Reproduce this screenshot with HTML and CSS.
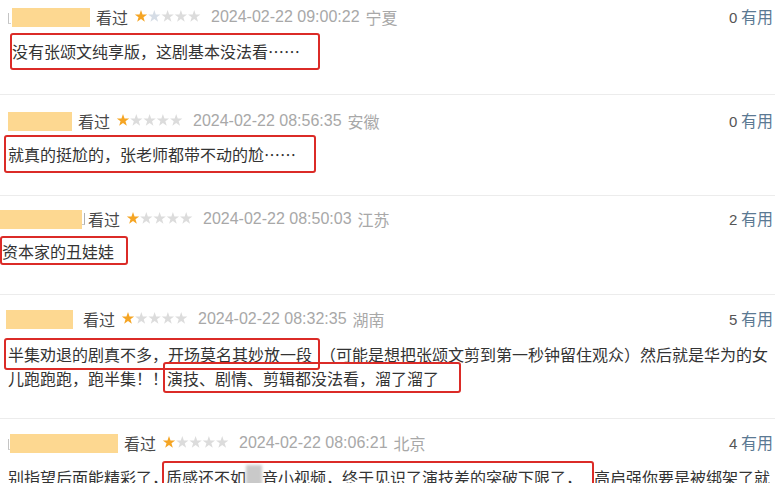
FILE: index.html
```html
<!DOCTYPE html>
<html lang="zh-CN">
<head>
<meta charset="utf-8">
<title>短评</title>
<link rel="stylesheet" href="styles.css">
</head>
<body>
<svg class="defs" width="0" height="0" aria-hidden="true">
  <defs>
    <polygon id="star" points="6.5,0 8.03,4.4 12.68,4.49 8.97,7.3 10.32,11.76 6.5,9.1 2.68,11.76 4.03,7.3 0.32,4.49 4.97,4.4"/>
  </defs>
</svg>
<div class="list">
  <div class="item item-1">
    <div class="head">
      <div class="meta">
        <span class="edge"></span><span class="blur b1"></span>
        <span class="seen">看过</span>
        <svg class="stars" width="68" height="13" viewBox="0 0 67 13"><use href="#star" class="on"/><use href="#star" x="13.3" class="off1"/><use href="#star" x="26.6" class="off"/><use href="#star" x="39.9" class="off"/><use href="#star" x="53.2" class="off"/></svg>
        <span class="date">2024-02-22 09:00:22</span><span class="loc">宁夏</span>
      </div>
      <div class="votes"><span class="num">0</span> 有用</div>
    </div>
    <p class="text"><span class="mark m1">没有张颂文纯享版，这剧基本没法看……</span></p>
  </div>

  <div class="item item-2">
    <div class="head">
      <div class="meta">
        <span class="blur b2"></span>
        <span class="seen">看过</span>
        <svg class="stars" width="68" height="13" viewBox="0 0 67 13"><use href="#star" class="on"/><use href="#star" x="13.3" class="off"/><use href="#star" x="26.6" class="off"/><use href="#star" x="39.9" class="off"/><use href="#star" x="53.2" class="off"/></svg>
        <span class="date">2024-02-22 08:56:35</span><span class="loc">安徽</span>
      </div>
      <div class="votes"><span class="num">0</span> 有用</div>
    </div>
    <p class="text"><span class="mark m2">就真的挺尬的，张老师都带不动的尬……</span></p>
  </div>

  <div class="item item-3">
    <div class="head">
      <div class="meta">
        <span class="blur b3"></span><span class="edge e3"></span>
        <span class="seen">看过</span>
        <svg class="stars" width="68" height="13" viewBox="0 0 67 13"><use href="#star" class="on"/><use href="#star" x="13.3" class="off"/><use href="#star" x="26.6" class="off"/><use href="#star" x="39.9" class="off"/><use href="#star" x="53.2" class="off"/></svg>
        <span class="date">2024-02-22 08:50:03</span><span class="loc">江苏</span>
      </div>
      <div class="votes"><span class="num">2</span> 有用</div>
    </div>
    <p class="text"><span class="mark m3">资本家的丑娃娃</span></p>
  </div>

  <div class="item item-4">
    <div class="head">
      <div class="meta">
        <span class="blur b4"></span>
        <span class="seen">看过</span>
        <svg class="stars" width="68" height="13" viewBox="0 0 67 13"><use href="#star" class="on"/><use href="#star" x="13.3" class="off"/><use href="#star" x="26.6" class="off"/><use href="#star" x="39.9" class="off"/><use href="#star" x="53.2" class="off"/></svg>
        <span class="date">2024-02-22 08:32:35</span><span class="loc">湖南</span>
      </div>
      <div class="votes"><span class="num">5</span> 有用</div>
    </div>
    <p class="text multi"><span class="mark m4">半集劝退的剧真不多，开场莫名其妙放一段</span>（可能是想把张颂文剪到第一秒钟留住观众）然后就是华为的女<br>儿跑跑跑，跑半集！！<span class="mark m5">演技、剧情、剪辑都没法看，溜了溜了</span></p>
  </div>

  <div class="item item-5">
    <div class="head">
      <div class="meta">
        <span class="edge"></span><span class="blur b5"></span>
        <span class="seen">看过</span>
        <svg class="stars" width="68" height="13" viewBox="0 0 67 13"><use href="#star" class="on"/><use href="#star" x="13.3" class="off"/><use href="#star" x="26.6" class="off"/><use href="#star" x="39.9" class="off"/><use href="#star" x="53.2" class="off"/></svg>
        <span class="date">2024-02-22 08:06:21</span><span class="loc">北京</span>
      </div>
      <div class="votes"><span class="num">4</span> 有用</div>
    </div>
    <p class="text multi">别指望后面能精彩了，<span class="mark m6">质感还不如<span class="hide">抖</span>音小视频，终于见识了演技差的突破下限了，</span>高启强你要是被绑架了就</p>
  </div>
</div>
</body>
</html>
```

FILE: styles.css
```css
* { box-sizing: border-box; }

html, body {
  margin: 0;
  padding: 0;
  background: #ffffff;
}

body {
  width: 775px;
  height: 483px;
  overflow: hidden;
  font-family: "Noto Sans CJK SC", "Noto Sans", sans-serif;
  font-size: 16px;
  color: #333333;
}

.defs { position: absolute; width: 0; height: 0; }

.list {
  display: flex;
  flex-direction: column;
}

.item {
  border-top: 1px solid #ececec;
  padding-right: 2px;
}

.item-1 { border-top: 0; height: 94px; padding-top: 7px; padding-left: 8px; }
.item-2 { height: 101px; padding-top: 16px; padding-left: 8px; }
.item-3 { height: 99px; padding-top: 13px; padding-left: 0; }
.item-4 { height: 124px; padding-top: 14px; padding-left: 6px; }
.item-5 { height: 80px; padding-top: 14px; padding-left: 8px; }

.head {
  display: flex;
  justify-content: space-between;
  align-items: center;
  height: 20px;
  line-height: 20px;
}

.meta {
  display: flex;
  align-items: center;
  white-space: nowrap;
}

.edge {
  display: inline-block;
  width: 3px;
  height: 11px;
  margin-right: 1px;
  margin-top: 3px;
  border-left: 1px solid #c4c4c4;
  border-bottom: 1px solid #d0d0d0;
}

.e3 {
  width: 5px;
  height: 12px;
  margin-left: -2px;
  margin-top: 0;
  border-left: 0;
  border-right: 1px solid #b0b0b0;
  border-bottom: 1px solid #c8c8c8;
}

.blur {
  display: inline-block;
  height: 19px;
  background: #fdd891;
  filter: blur(0.6px);
}

.b1 { width: 78px; }
.b2 { width: 64px; }
.b3 { width: 82px; }
.b4 { width: 67px; margin-left: 0; }
.b5 { width: 108px; margin-left: -2px; }

.seen {
  color: #494949;
  margin-left: 6px;
}

.item-3 .seen { margin-left: 2px; }
.item-4 .seen { margin-left: 10px; }

.stars {
  margin-left: 6px;
  margin-top: -1px;
}

.stars .on { fill: #f5a524; }
.stars .off { fill: #dcdcdc; }
.stars .off1 { fill: #d6dde6; }

.date {
  margin-left: 9px;
  color: #a8a8a8;
  font-family: "Liberation Sans", "Noto Sans CJK SC", sans-serif;
  font-size: 16px;
}

.loc {
  margin-left: 6px;
  color: #a8a8a8;
}

.votes {
  color: #5b7993;
  white-space: nowrap;
}

.num {
  color: #555555;
  font-family: "Liberation Sans", sans-serif;
  font-size: 15px;
}

.text {
  margin: 0;
  line-height: 24px;
  white-space: nowrap;
}

.item-1 .text { margin-top: 6px; }
.item-2 .text { margin-top: 4px; margin-left: -4px; }
.item-3 .text { margin-top: 7px; }
.item-4 .text { margin-top: 13px; margin-left: 2px; }
.item-5 .text { margin-top: 12px; }

.mark {
  border: 2px solid #db2b27;
  border-radius: 3px;
}

.m1 {
  display: inline-block;
  padding: 4px 18px 5px 0;
  margin-left: 2px;
}

.m2 {
  display: inline-block;
  padding: 5px 18px 5px 2px;
}

.m3 {
  display: inline-block;
  padding: 1px 12px 0 0;
  margin-left: 0;
}

.m4 {
  padding: 2px 6px 2px 2px;
  margin-left: -4px;
}

.m5 {
  padding: 2px 20px 1px 2px;
  margin-left: -5px;
}

.m6 {
  padding: 2px 10px 2px 2px;
  margin-left: -6px;
}

.hide {
  color: transparent;
  background: #c9c9c9;
  filter: blur(1.5px);
}
```
